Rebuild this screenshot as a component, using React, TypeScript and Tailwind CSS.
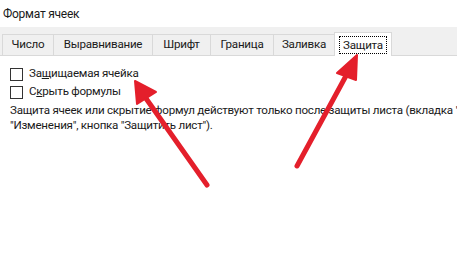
import React from 'react';

const tabs = [
  { label: 'Число', w: 'w-[51px]' },
  { label: 'Выравнивание', w: 'w-[99px]' },
  { label: 'Шрифт', w: 'w-[58px]' },
  { label: 'Граница', w: 'w-[63px]' },
  { label: 'Заливка', w: 'w-[61px]' },
];

function Check({ children }: { children: React.ReactNode }) {
  return (
    <label className="flex items-center gap-[6px] h-[18px]">
      <span className="w-[13px] h-[13px] border border-[#333] bg-white shrink-0" />
      <span>{children}</span>
    </label>
  );
}

export default function App() {
  return (
    <div className="relative w-[457px] h-[270px] overflow-hidden bg-white text-[11.6px] tracking-[-0.25px] text-[#1a1a1a] font-['Roboto',sans-serif]">
      <div className="h-[27px] pl-[3px] pt-[5px] text-[12px]">Формат ячеек</div>

      <div className="h-[29px] bg-[#f0f0f0] flex items-end pl-[2px] border-b border-[#d9d9d9]">
        {tabs.map((t) => (
          <div
            key={t.label}
            className={`${t.w} h-[21px] flex items-center justify-center border-t border-l border-[#d9d9d9] leading-none`}
          >
            {t.label}
          </div>
        ))}
        <div className="w-[58px] h-[24px] -mb-px bg-white border border-b-0 border-[#d9d9d9] flex items-center justify-center">
          <span className="px-[3px] py-[1px] border border-dotted border-black leading-[14px]">Защита</span>
        </div>
        <div className="flex-1 h-[21px]" />
      </div>

      <div className="pl-[10px] pt-[9px] whitespace-nowrap">
        <Check>
          За<span className="underline">щ</span>ищаемая ячейка
        </Check>
        <Check>
          С<span className="underline">к</span>рыть формулы
        </Check>
        <div className="mt-[2px] leading-[15px]">
          <div>Защита ячеек или скрытие формул действуют только после защиты листа (вкладка "Рецензирование",</div>
          <div>"Изменения", кнопка "Защитить лист").</div>
        </div>
      </div>

      <svg className="absolute inset-0 pointer-events-none" width="457" height="270" viewBox="0 0 457 270">
        <g fill="#e41f2b" stroke="#e41f2b" strokeLinecap="round" strokeLinejoin="round">
          <line x1="207" y1="185" x2="145" y2="97" strokeWidth="5" />
          <polygon points="135,81 137,104 156,92" strokeWidth="2" />
          <line x1="297" y1="166" x2="347" y2="74" strokeWidth="5" />
          <polygon points="357,55 337,73 356,80" strokeWidth="2" />
        </g>
      </svg>
    </div>
  );
}
